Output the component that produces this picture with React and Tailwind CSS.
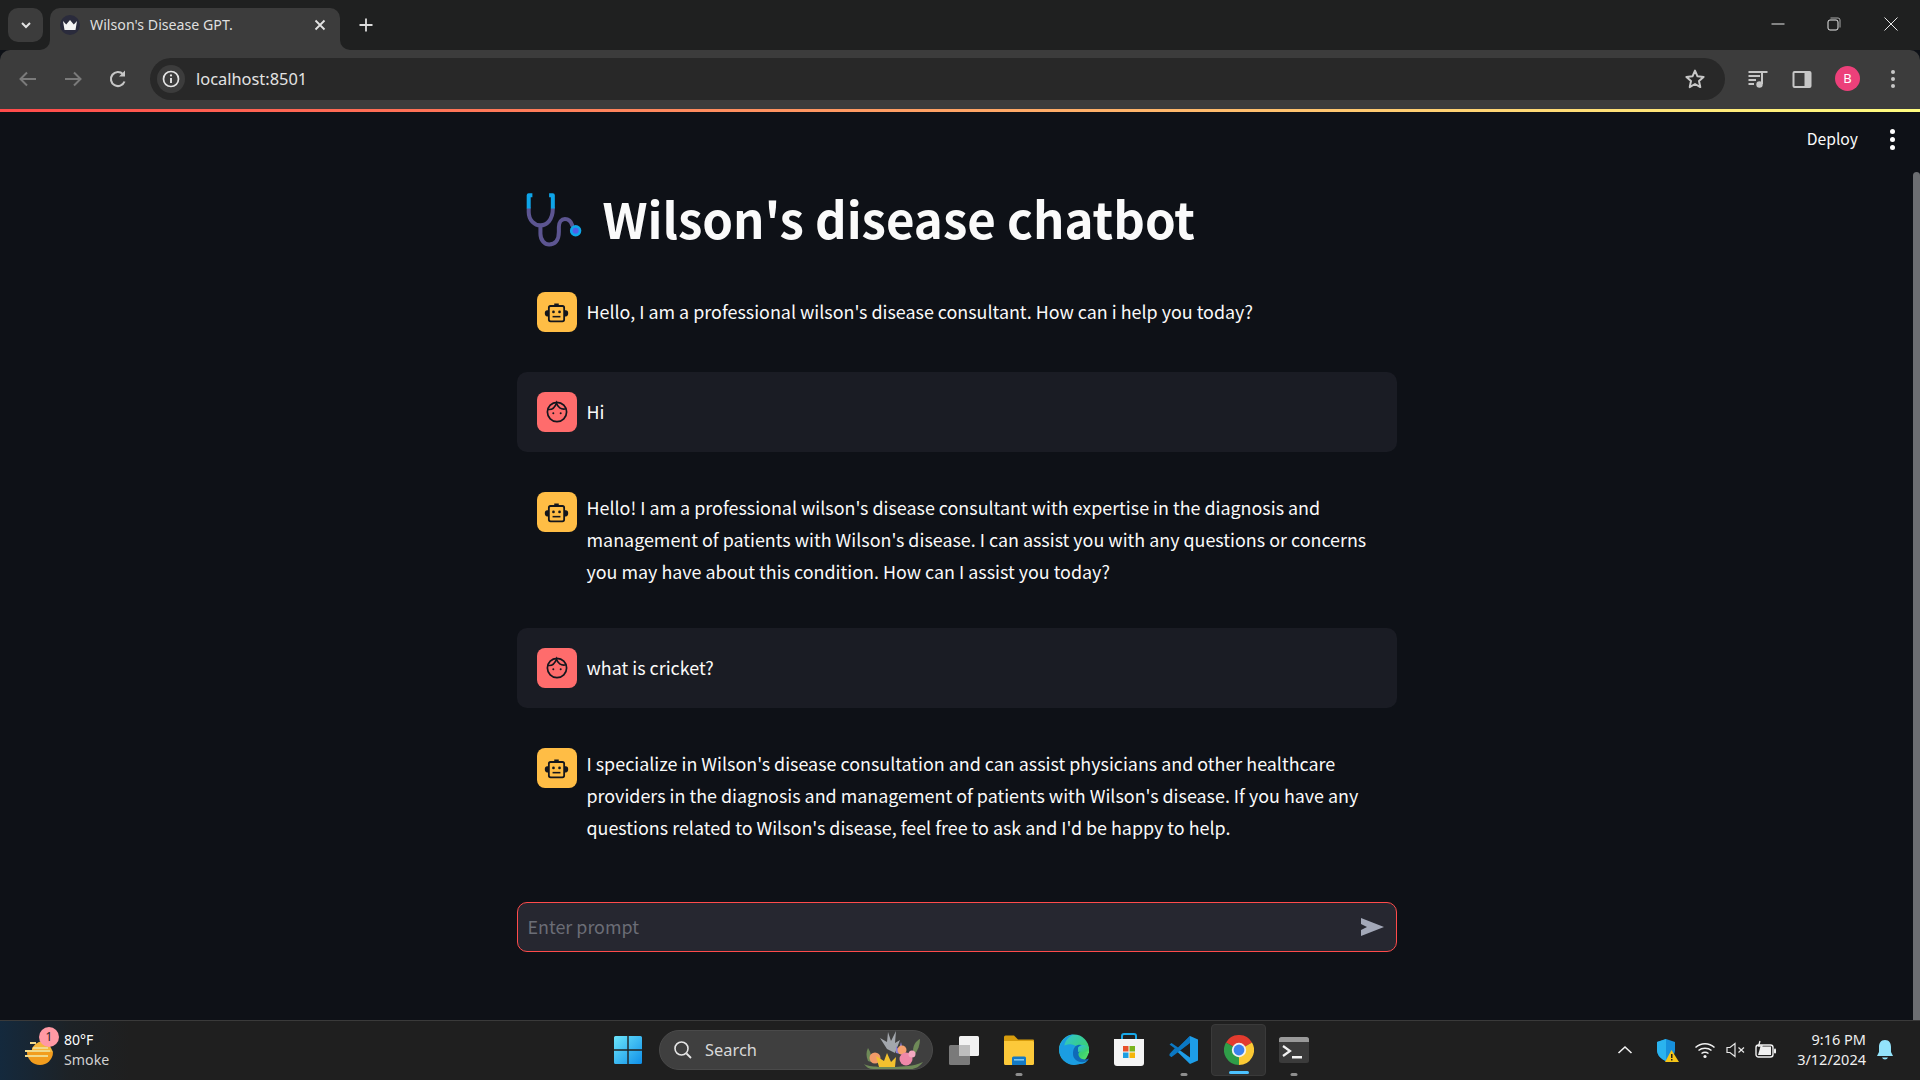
const sans = '"Noto Sans CJK SC","Noto Sans",sans-serif';

function Stethoscope() {
  return (
    <svg width="62" height="60" viewBox="40 60 185 178" fill="none" strokeWidth="12" strokeLinecap="round" strokeLinejoin="round">
      <path d="M57 115V125C57 150 75 165 92 165C110 165 129 150 129 115M92 165V190C92 210 105 222 118 222C135 222 147 210 147 185V170C147 155 155 146 165 146C178 146 184 155 187 165" stroke="#5c5591" />
      <path d="M68 75H57V115M118 75H129V115" stroke="#0ea5e9" strokeLinecap="butt" />
      <circle cx="197" cy="181" r="17" fill="#0ea5e9" />
      <circle cx="197" cy="181" r="9" fill="#4f5fe8" />
    </svg>
  );
}

function BotAvatar() {
  return (
    <div className="w-10 h-10 shrink-0 rounded-lg bg-[#ffbd45] flex items-center justify-center">
      <svg width="27" height="27" viewBox="0 0 24 24" fill="none">
        <rect x="5.2" y="6.2" width="13.6" height="13.6" rx="1.5" stroke="#14161d" strokeWidth="1.6" />
        <path d="M10 5.5 V4 H14 V5.5 Z" fill="#14161d" />
        <path d="M5 10 H3.8 A2 2.5 0 0 0 3.8 15.5 H5 Z M19 10 H20.2 A2 2.5 0 0 1 20.2 15.5 H19 Z" fill="#14161d" />
        <circle cx="9.3" cy="11.5" r="1.2" fill="#14161d" />
        <circle cx="14.7" cy="11.5" r="1.2" fill="#14161d" />
        <rect x="8.5" y="15" width="7" height="1.4" fill="#14161d" />
      </svg>
    </div>
  );
}

function UserAvatar() {
  return (
    <div className="w-10 h-10 shrink-0 rounded-lg bg-[#ff6c6c] flex items-center justify-center">
      <svg width="24" height="24" viewBox="0 0 24 24" fill="none">
        <circle cx="12" cy="12" r="9.6" stroke="#14161d" strokeWidth="1.7" />
        <path d="M3 9.5C7 10 10 7.5 11.5 3C12.5 7 16 10 21 8.8" stroke="#14161d" strokeWidth="1.6" />
        <circle cx="8.3" cy="13.3" r="1" fill="#14161d" />
        <circle cx="15.7" cy="13.3" r="1" fill="#14161d" />
      </svg>
    </div>
  );
}

function Message({ user, center, children }) {
  return (
    <div className={`flex gap-[10px] p-5 rounded-[10px] ${center ? 'items-center' : 'items-start'} ${user ? 'bg-[#1a1c24]' : ''}`}>
      {user ? <UserAvatar /> : <BotAvatar />}
      <div className={`text-[17.9px] leading-[32px] text-[#fafafa] flex-1 ${center ? 'pb-[2px]' : '-mt-[1px] pb-[1px]'}`}>{children}</div>
    </div>
  );
}

function ToolIcon({ children, w = 24, h = 24, vb = '0 0 24 24' }) {
  return <svg width={w} height={h} viewBox={vb} fill="none">{children}</svg>;
}

function TabStrip() {
  return (
    <div className="h-[50px] shrink-0 bg-[#1f2020] flex items-start relative">
      <div className="ml-2 mt-2 w-[35px] h-[34px] rounded-[10px] bg-[#3c3c3c] flex items-center justify-center">
        <ToolIcon w={14} h={14} vb="0 0 14 14"><path d="M3 5 L7 9 L11 5" stroke="#e3e3e3" strokeWidth="2" /></ToolIcon>
      </div>
      <div className="ml-[7px] mt-2 w-[290px] h-[42px] rounded-t-[10px] bg-[#3c3c3c] flex items-center pl-[10px] pr-[13px] pb-2 relative">
        <div className="w-5 h-5 rounded-full bg-[#2a2b3c] flex items-center justify-center">
          <ToolIcon w={16} h={12} vb="0 0 16 12"><path d="M1 2L4.2 5.5L8 1L11.8 5.5L15 2L13.5 11H2.5Z" fill="#f4f4f4" /></ToolIcon>
        </div>
        <span className="ml-[10px] text-[14.2px] text-[#dfdfdf] flex-1" style={{ fontFamily: '"Noto Sans",sans-serif' }}>Wilson's Disease GPT.</span>
        <ToolIcon w={14} h={14} vb="0 0 14 14"><path d="M2.5 2.5L11.5 11.5M11.5 2.5L2.5 11.5" stroke="#e3e3e3" strokeWidth="1.8" /></ToolIcon>
        <div className="absolute bottom-0 right-[-10px] w-[10px] h-[10px] bg-[#3c3c3c]"><div className="w-full h-full bg-[#1f2020] rounded-bl-[10px]" /></div>
        <div className="absolute bottom-0 left-[-10px] w-[10px] h-[10px] bg-[#3c3c3c]"><div className="w-full h-full bg-[#1f2020] rounded-br-[10px]" /></div>
      </div>
      <div className="ml-[13px] mt-[12px] w-[26px] h-[26px] flex items-center justify-center">
        <ToolIcon w={16} h={16} vb="0 0 16 16"><path d="M8 1.5V14.5M1.5 8H14.5" stroke="#dcdcdc" strokeWidth="1.8" /></ToolIcon>
      </div>
      <div className="ml-auto flex items-center h-[48px]">
        <div className="w-[56px] flex justify-center">
          <ToolIcon w={14} h={14} vb="0 0 14 14"><path d="M0.5 7H13.5" stroke="#e8e8e8" strokeWidth="1" /></ToolIcon>
        </div>
        <div className="w-[56px] flex justify-center">
          <ToolIcon w={14} h={14} vb="0 0 14 14"><rect x="1" y="3" width="10" height="10" rx="2" stroke="#e8e8e8" /><path d="M3.5 1H11A2 2 0 0 1 13 3V10.5" stroke="#aaa" /></ToolIcon>
        </div>
        <div className="w-[58px] flex justify-center">
          <ToolIcon w={14} h={14} vb="0 0 14 14"><path d="M0.5 0.5L13.5 13.5M13.5 0.5L0.5 13.5" stroke="#e8e8e8" /></ToolIcon>
        </div>
      </div>
    </div>
  );
}

function Toolbar() {
  return (
    <div className="h-[59px] shrink-0 bg-[#3c3c3c] rounded-t-[10px] flex items-center pb-[2px]">
      <div className="w-[150px] flex items-center pl-[16px] gap-[21px]">
        <ToolIcon><path d="M20 12H5M11 5.5L4.5 12L11 18.5" stroke="#7a7a7a" strokeWidth="2" /></ToolIcon>
        <ToolIcon><path d="M4 12H19M13 5.5L19.5 12L13 18.5" stroke="#7a7a7a" strokeWidth="2" /></ToolIcon>
        <ToolIcon><path d="M18.5 14.5A7 7 0 1 1 17 7.2" stroke="#c7c7c7" strokeWidth="2.1" /><path d="M19 3.5V9.5H13Z" fill="#c7c7c7" /></ToolIcon>
      </div>
      <div className="w-[1575px] h-[42px] rounded-full bg-[#282828] flex items-center pl-[7px] pr-[18px]">
        <div className="w-[28px] h-[28px] rounded-full bg-[#3c3c3c] flex items-center justify-center">
          <ToolIcon w={18} h={18} vb="0 0 18 18"><circle cx="9" cy="9" r="7.5" stroke="#e3e3e3" strokeWidth="1.7" /><path d="M9 8V13" stroke="#e3e3e3" strokeWidth="1.9" /><circle cx="9" cy="5.4" r="1.1" fill="#e3e3e3" /></ToolIcon>
        </div>
        <span className="ml-[11px] pt-[2px] text-[16.4px] text-[#e3e3e3] flex-1" style={{ fontFamily: '"Noto Sans",sans-serif' }}>localhost:8501</span>
        <ToolIcon><path d="M12 3.6L14.5 9.3L20.6 9.9L16 14L17.3 20.1L12 17L6.7 20.1L8 14L3.4 9.9L9.5 9.3Z" stroke="#c7c7c7" strokeWidth="2" strokeLinejoin="round" /></ToolIcon>
      </div>
      <div className="ml-[21px] flex items-center">
        <ToolIcon><path d="M2.5 5H15M2.5 9H14M2.5 13H10M2.5 17H8" stroke="#c7c7c7" strokeWidth="1.9" /><path d="M16 17V5H21.5" stroke="#c7c7c7" strokeWidth="2" /><circle cx="13.5" cy="17.5" r="3.2" fill="#c7c7c7" /></ToolIcon>
        <div className="ml-[20px]">
          <ToolIcon><rect x="2.5" y="4" width="19" height="17" rx="2" fill="#c7c7c7" /><rect x="4.5" y="6" width="10" height="13" fill="#3c3c3c" /></ToolIcon>
        </div>
        <div className="ml-[21px] w-[25px] h-[25px] rounded-full bg-[#ec407a] text-white text-[13px] flex items-center justify-center" style={{ fontFamily: '"Noto Sans",sans-serif' }}>B</div>
        <div className="ml-[31px] flex flex-col gap-[3px]">
          <div className="w-1 h-1 rounded-full bg-[#c7c7c7]" />
          <div className="w-1 h-1 rounded-full bg-[#c7c7c7]" />
          <div className="w-1 h-1 rounded-full bg-[#c7c7c7]" />
        </div>
      </div>
    </div>
  );
}

function WinLogo() {
  return (
    <svg width="30" height="30" viewBox="0 0 30 30">
      <defs><linearGradient id="w" x1="0" y1="0" x2="1" y2="1"><stop offset="0" stopColor="#6ce5fb" /><stop offset="1" stopColor="#0f8fe8" /></linearGradient></defs>
      <path d="M1 2.5A1.5 1.5 0 0 1 2.5 1H14.3V14.3H1ZM15.7 1H27.5A1.5 1.5 0 0 1 29 2.5V14.3H15.7ZM1 15.7H14.3V29H2.5A1.5 1.5 0 0 1 1 27.5ZM15.7 15.7H29V27.5A1.5 1.5 0 0 1 27.5 29H15.7Z" fill="url(#w)" />
    </svg>
  );
}

function Flowers() {
  return (
    <svg width="62" height="40" viewBox="0 0 62 40" className="absolute right-[7px] bottom-[0px]">
      <path d="M5 32C3 27 3 23 5 19C8 24 9 28 8 33Z" fill="#6f8a58" />
      <path d="M50 22C50 16 53 12 57 10C57 16 55 21 52 25Z" fill="#6f8a58" />
      <path d="M24 20L17 9L24 13L25 3L28 12L33 2L32 14L37 11L32 24Z" fill="#a3a7ad" />
      <path d="M33 24L33 17L36 21L38 13L41 26Z" fill="#8b7fd6" />
      <circle cx="12" cy="29" r="5.5" fill="#f29a68" />
      <path d="M16 38L13 27L21 32L24 24L28 33L33 28L32 38Z" fill="#f2c12e" />
      <circle cx="39" cy="21" r="4.5" fill="#f5a06f" />
      <circle cx="43" cy="30" r="6.5" fill="#ee88a8" />
      <circle cx="49" cy="25" r="3.5" fill="#f2a9c0" />
      <path d="M1 35C6 38 12 37 16 38L32 38C40 37 50 38 60 33C56 38 52 40 48 40H10C6 40 3 38 1 35Z" fill="#6f8a58" />
    </svg>
  );
}

function TaskIcon({ children, dot, active }) {
  return (
    <div className={`relative w-[55px] h-[52px] flex items-center justify-center rounded ${active ? 'bg-[#2f2f2f] border border-[#3a3a3a]' : ''}`}>
      {children}
      {dot && <div className="absolute bottom-0 left-1/2 -translate-x-1/2 w-[7px] h-[3px] rounded-full bg-[#8e8e8e]" />}
      {active && <div className="absolute bottom-[1px] left-1/2 -translate-x-1/2 w-[20px] h-[3px] rounded-full bg-[#4cc2ff]" />}
    </div>
  );
}

function Taskbar() {
  return (
    <div className="h-[60px] shrink-0 border-t border-[#3a3a3a] bg-[linear-gradient(90deg,#14293d_0px,#1d2226_70px,#1f1f1f_130px)] flex items-center relative text-white pb-[2px]" style={{ fontFamily: '"Noto Sans",sans-serif' }}>
      <div className="w-[600px] shrink-0 flex items-center pl-[24px]">
        <div className="relative w-[40px] h-[40px]">
          <svg width="32" height="32" viewBox="0 0 32 32" className="absolute left-0 top-[4px]">
            <path d="M3 18H29A13 13 0 0 1 3 18Z" fill="#f29d1e" />
            <path d="M8 14A13 13 0 0 1 24 8L29 18H8Z" fill="#f5b63b" />
            <path d="M6 9H12M9 14H24M1 17H26M1 22H24" stroke="#f0d98a" strokeWidth="2" />
          </svg>
          <div className="absolute left-[15px] top-[-3px] w-5 h-5 rounded-full bg-[#ff99a4] text-[#1f1f1f] text-[12px] flex items-center justify-center">1</div>
        </div>
        <div className="flex flex-col leading-[20px]">
          <span className="text-[14px] text-white">80°F</span>
          <span className="text-[14.2px] text-[#d0d0d0]">Smoke</span>
        </div>
      </div>
      <div className="flex items-center">
        <TaskIcon><WinLogo /></TaskIcon>
        <div className="relative w-[274px] h-[40px] ml-[4px] mr-[3px] rounded-full bg-[#3f3f3f] border border-[#4a4a4a] flex items-center pl-[13px]">
          <ToolIcon w={20} h={20} vb="0 0 20 20"><circle cx="8.5" cy="8.5" r="6.5" stroke="#e6e6e6" strokeWidth="1.6" /><path d="M13.5 13.5L18 18" stroke="#e6e6e6" strokeWidth="1.8" /></ToolIcon>
          <span className="ml-[12px] pt-[2px] text-[16.4px] text-[#d8d8d8]">Search</span>
          <Flowers />
        </div>
        <TaskIcon>
          <svg width="32" height="32" viewBox="0 0 32 32"><rect x="11" y="2" width="20" height="20" rx="1.5" fill="#f2f2f2" /><rect x="1" y="11" width="21" height="20" rx="1.5" fill="#7a7a7a" /><rect x="11" y="11" width="11" height="11" fill="#bdbdbd" /></svg>
        </TaskIcon>
        <TaskIcon dot>
          <svg width="30" height="32" viewBox="0 0 30 32"><path d="M0 3A1.5 1.5 0 0 1 1.5 1.5H10L14 5.5H29A1 1 0 0 1 30 6.5V10H0Z" fill="#d89d0d" /><path d="M0 7H28.5A1.5 1.5 0 0 1 30 8.5V30A1.5 1.5 0 0 1 28.5 31H1.5A1.5 1.5 0 0 1 0 29.5Z" fill="#fcc93a" /><path d="M8 31V24A1.5 1.5 0 0 1 9.5 22.5H20.5A1.5 1.5 0 0 1 22 24V31Z" fill="#1479c4" /><rect x="10" y="25" width="10" height="1.6" fill="#7cc6f2" /></svg>
        </TaskIcon>
        <TaskIcon>
          <svg width="30" height="31" viewBox="0 0 30 31">
            <defs>
              <linearGradient id="e2" x1="0" y1="0" x2="1" y2="1"><stop offset="0" stopColor="#2fc2df" /><stop offset="0.7" stopColor="#3bd16f" /><stop offset="1" stopColor="#66eb6e" /></linearGradient>
            </defs>
            <circle cx="15" cy="15.5" r="15" fill="url(#e2)" />
            <path d="M0 15C1 7 8 .5 15 .5C8 3 4 9 5.5 17C7 25 14 30 21 30C25 30 28 28 29.5 25C26 28.5 19 28 16 24C13.5 20.5 15 17 18 16C15 12 11 12 8 14C5 16 3 15 0 15Z" fill="#1b9de2" />
            <path d="M0 15.5C0 24 7 31 15 31C18 31 22 30 25 28C20 29 13 27 11 21C9 16 12 12.5 18 13C14.5 9 7 9.5 4 12.5C2 14 1 14 0 15.5Z" fill="#1b9de2" />
            <path d="M14 20C14 25 19 29 25 28C28 27 29 26 30 24.5C24 27 19 24 19.5 19.5C20 17 24 17 29.5 19C30 14 24 10 19 11C15 12 14 16 14 20Z" fill="#0f6ab8" />
            <path d="M19 13.5A6 5 0 0 1 30 19C27 20 23 17 19 18Z" fill="url(#e2)" />
          </svg>
        </TaskIcon>
        <TaskIcon>
          <svg width="30" height="34" viewBox="0 0 30 34"><path d="M8 7V3A2 2 0 0 1 10 1H20A2 2 0 0 1 22 3V7" stroke="#18a8e8" strokeWidth="2" fill="none" /><path d="M0 6H30V30A3 3 0 0 1 27 33H3A3 3 0 0 1 0 30Z" fill="#f4f4f4" /><rect x="9" y="13" width="5.5" height="5.5" fill="#e8502a" /><rect x="15.5" y="13" width="5.5" height="5.5" fill="#7ab41d" /><rect x="9" y="19.5" width="5.5" height="5.5" fill="#1c9de2" /><rect x="15.5" y="19.5" width="5.5" height="5.5" fill="#f5b50a" /></svg>
        </TaskIcon>
        <TaskIcon dot>
          <svg width="30" height="30" viewBox="0 0 30 30"><path d="M21 1L29 4.5V25.5L21 29L7 15.5Z" fill="#1d9de8" /><path d="M21 7.5V22.5L10.5 15Z" fill="#1f1f1f" /><path d="M21 1V8L6 19.5L2.5 22L.5 20.5L8 15L.5 9.5L2.5 8L9 12.5Z" fill="#0b78c4" /><path d="M6 13L9 15L2.5 22L.5 20.5V19Z" fill="#0b78c4" /></svg>
        </TaskIcon>
        <TaskIcon active>
          <svg width="30" height="30" viewBox="0 0 30 30">
            <path d="M15 15L2 7.5A15 15 0 0 1 28 7.5Z" fill="#e33b2e" />
            <path d="M15 15L2 7.5A15 15 0 0 0 15 30Z" fill="#2f9d48" />
            <path d="M15 15L28 7.5A15 15 0 0 1 15 30Z" fill="#fbc934" />
            <circle cx="15" cy="15" r="7.2" fill="#f1f1f1" />
            <circle cx="15" cy="15" r="5.4" fill="#3b82ee" />
          </svg>
        </TaskIcon>
        <TaskIcon dot>
          <svg width="30" height="30" viewBox="0 0 30 30"><rect x="0" y="2" width="30" height="26" rx="2.5" fill="#3b3b3b" /><path d="M0 4.5A2.5 2.5 0 0 1 2.5 2H27.5A2.5 2.5 0 0 1 30 4.5V7H0Z" fill="#9a9a9a" /><path d="M4 11L11 16L4 21" stroke="#f2f2f2" strokeWidth="2.2" fill="none" /><rect x="13" y="21" width="10" height="2.5" fill="#f2f2f2" /></svg>
        </TaskIcon>
      </div>
      <div className="ml-auto flex items-center pr-[24px]">
        <ToolIcon w={16} h={16} vb="0 0 16 16"><path d="M1.5 11L8 5L14.5 11" stroke="#f0f0f0" strokeWidth="1.6" /></ToolIcon>
        <div className="ml-[23px] relative w-[22px] h-[24px]">
          <svg width="24" height="24" viewBox="0 0 24 24"><path d="M10 1L19 4V12C19 17 15 21 10 23C5 21 1 17 1 12V4Z" fill="#1790dc" /><path d="M10 1V23C5 21 1 17 1 12V4Z" fill="#2ab3ee" /><path d="M15.5 12L23 24H9Z" fill="#f5c518" /><rect x="15" y="16" width="1.5" height="4" fill="#1f1f1f" /><rect x="15" y="21" width="1.5" height="1.5" fill="#1f1f1f" /></svg>
        </div>
        <div className="ml-[16px]">
          <ToolIcon w={22} h={18} vb="0 0 22 18"><path d="M1.5 6.5C7 1.5 15 1.5 20.5 6.5M4.5 9.5C8 6.5 14 6.5 17.5 9.5M7.5 12.5C9.5 11 12.5 11 14.5 12.5" stroke="#f0f0f0" strokeWidth="1.5" /><circle cx="11" cy="15.5" r="1.6" fill="#f0f0f0" /></ToolIcon>
        </div>
        <div className="ml-[10px]">
          <ToolIcon w={20} h={16} vb="0 0 20 16"><path d="M1 5.5H4L9 1.5V14.5L4 10.5H1Z" stroke="#e6e6e6" strokeWidth="1.2" /><path d="M12.5 5.5L18 10.5M18 5.5L12.5 10.5" stroke="#e6e6e6" strokeWidth="1.2" /></ToolIcon>
        </div>
        <div className="ml-[9px]">
          <ToolIcon w={22} h={20} vb="0 0 22 20"><rect x="1" y="5" width="17" height="12" rx="2.5" stroke="#f0f0f0" strokeWidth="1.4" /><rect x="19" y="8.5" width="2" height="5" rx="1" fill="#f0f0f0" /><path d="M3 15L5.5 6.5H16V15Z" fill="#f0f0f0" /><path d="M5 1L3.5 6H7L5.5 10" stroke="#f0f0f0" strokeWidth="1.3" fill="none" /></ToolIcon>
        </div>
        <div className="ml-[13px] pb-[2px] flex flex-col items-end leading-[20px] text-[14.5px] text-[#efefef] w-[76px]">
          <span>9:16 PM</span>
          <span>3/12/2024</span>
        </div>
        <div className="ml-[8px]">
          <ToolIcon w={22} h={24} vb="0 0 22 24"><path d="M11 2C6.5 2 5 5.5 5 9V14L3 18H19L17 14V9C17 5.5 15.5 2 11 2Z" fill="#93e3fb" /><path d="M8 19.5A3.2 3 0 0 0 14 19.5Z" fill="#93e3fb" /></ToolIcon>
        </div>
      </div>
    </div>
  );
}

export default function App() {
  return (
    <div className="w-[1920px] h-[1080px] overflow-hidden flex flex-col bg-[#0e1117]" style={{ fontFamily: sans }}>
      <TabStrip />
      <Toolbar />
      <div className="h-[3px] shrink-0 bg-[linear-gradient(90deg,#ff4b4b,#fffd80)]" />
      <div className="flex-1 min-h-0 flex relative bg-[#0e1117]">
        <div className="flex-1 min-w-0 pt-[68px]">
          <div className="w-[880px] mx-auto">
            <div className="h-[80px] flex items-center mb-[12px]">
              <div className="ml-[6px] w-[80px]"><Stethoscope /></div>
              <h1 className="text-[49.2px] font-bold text-[#fafafa] leading-[80px] pb-[5px]">Wilson's disease chatbot</h1>
            </div>
            <div className="flex flex-col gap-5">
              <Message center>Hello, I am a professional wilson's disease consultant. How can i help you today?</Message>
              <Message user center>Hi</Message>
              <Message>Hello! I am a professional wilson's disease consultant with expertise in the diagnosis and management of patients with Wilson's disease. I can assist you with any questions or concerns you may have about this condition. How can I assist you today?</Message>
              <Message user center>what is cricket?</Message>
              <Message>I specialize in Wilson's disease consultation and can assist physicians and other healthcare providers in the diagnosis and management of patients with Wilson's disease. If you have any questions related to Wilson's disease, feel free to ask and I'd be happy to help.</Message>
            </div>
            <div className="mt-[38px] h-[50px] rounded-[10px] border-[1.5px] border-[#ff4b4b] bg-[#262730] flex items-center pl-[10px] pr-[12px]">
              <input placeholder="Enter prompt" className="flex-1 bg-transparent outline-none text-[17.9px] text-[#fafafa] placeholder:text-[#6b6d76] pb-[2px]" />
              <svg width="24" height="20" viewBox="0 0 24 20"><path d="M1 1L24 10L1 19V13L7 10L1 7Z" fill="#a3a8b8" /></svg>
            </div>
          </div>
        </div>
        <div className="w-[7px] shrink-0 pt-[60px]">
          <div className="h-full bg-[#6c6e72] rounded-t-[4px]" />
        </div>
        <div className="absolute top-[16px] right-[25px] flex items-center text-[#fafafa]">
          <span className="text-[15.7px] leading-[22px]">Deploy</span>
          <div className="ml-[32px] flex flex-col gap-[3px]">
            <div className="w-[5px] h-[5px] rounded-full bg-white" />
            <div className="w-[5px] h-[5px] rounded-full bg-white" />
            <div className="w-[5px] h-[5px] rounded-full bg-white" />
          </div>
        </div>
      </div>
      <Taskbar />
    </div>
  );
}
